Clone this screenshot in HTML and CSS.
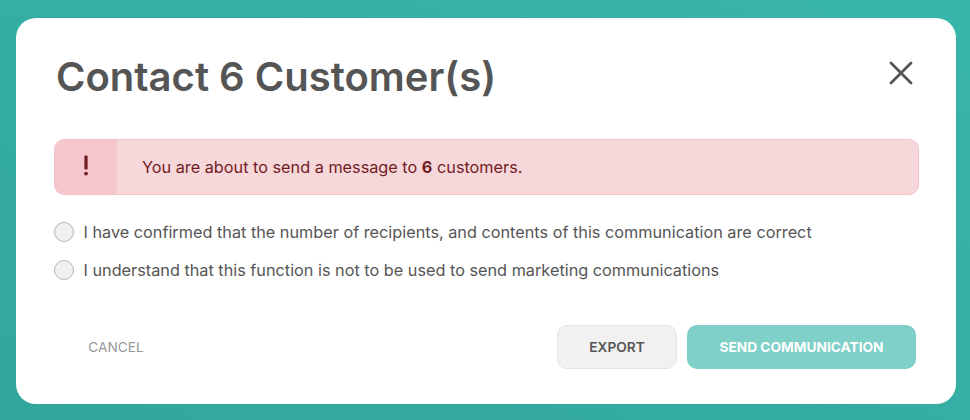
FILE: index.html
```html
<!DOCTYPE html>
<html lang="en">
<head>
  <meta charset="UTF-8">
  <meta name="viewport" content="width=device-width, initial-scale=1.0">
  <title>Contact Customers</title>
  <link rel="stylesheet" href="styles.css">
</head>
<body>
  <div class="modal">
    <!-- Header -->
    <header class="modal-header">
      <h1>Contact 6 Customer(s)</h1>
      <button class="close-btn" aria-label="Close">
        <svg width="24" height="24" viewBox="0 0 24 24" fill="none" stroke="#555" stroke-width="2.8" stroke-linecap="round">
          <path d="M2 2L22 22M22 2L2 22"/>
        </svg>
      </button>
    </header>

    <!-- Warning -->
    <div class="alert">
      <div class="alert-icon">
        <svg width="6" height="22" viewBox="0 0 6 22" fill="#721c24">
          <rect x="1.4" y="0.5" width="3.2" height="14" rx="1.2"/>
          <circle cx="3" cy="18.6" r="1.9"/>
        </svg>
      </div>
      <p class="alert-text">You are about to send a message to <strong>6</strong> customers.</p>
    </div>

    <!-- Confirmations -->
    <div class="confirmations">
      <label class="confirm"><input type="checkbox"><span>I have confirmed that the number of recipients, and contents of this communication are correct</span></label>
      <label class="confirm"><input type="checkbox"><span>I understand that this function is not to be used to send marketing communications</span></label>
    </div>

    <!-- Footer -->
    <footer class="modal-footer">
      <button class="btn btn-cancel">Cancel</button>
      <button class="btn btn-export">Export</button>
      <button class="btn btn-send">Send Communication</button>
    </footer>
  </div>
</body>
</html>
```
FILE: styles.css
```css
* {
  margin: 0;
  padding: 0;
  box-sizing: border-box;
  font-family: Inter, sans-serif;
}

body {
  height: 420px;
  padding: 18px 14px 16px 16px;
  background: linear-gradient(to top right, #32a69b, #38b5aa);
  color: #555;
  overflow: hidden;
}

.modal {
  height: 386px;
  padding: 34px 37px 35px 38px;
  background: white;
  border-radius: 20px;
}

/* Header */
.modal-header {
  display: flex;
  justify-content: space-between;
  height: 87px;
  padding: 0 6px 0 2px;
}

h1 {
  font-size: 40px;
  font-weight: 600;
  line-height: 50px;
}

.close-btn {
  height: 24px;
  margin-top: 9px;
  background: none;
  border: none;
  cursor: pointer;
}

.close-btn svg {
  display: block;
}

/* Warning */
.alert {
  display: flex;
  height: 56px;
  background: #f6d7da;
  border: 1px solid #f5c2ca;
  border-radius: 10px;
  color: #721c24;
  overflow: hidden;
}

.alert-icon {
  display: flex;
  justify-content: center;
  align-items: center;
  width: 62px;
  padding-bottom: 2px;
  background: #f5c6cd;
}

.alert-text {
  padding-left: 25px;
  font-size: 16.25px;
  line-height: 54px;
}

/* Confirmations */
.confirmations {
  display: grid;
  gap: 18px;
  padding-top: 27px;
}

.confirm {
  display: flex;
  align-items: center;
  gap: 9.5px;
  height: 20px;
  font-size: 16.25px;
}

.confirm input {
  appearance: none;
  width: 20px;
  height: 20px;
  background: #f1f1f1;
  border: 1px solid #b0b5ba;
  border-radius: 50%;
}

/* Footer */
.modal-footer {
  display: flex;
  gap: 10px;
  margin-top: 45px;
  padding-right: 3px;
}

.btn {
  height: 44px;
  border: 1px solid transparent;
  border-radius: 10px;
  font-size: 13.7px;
  font-weight: 600;
  text-transform: uppercase;
  cursor: pointer;
}

.btn-cancel {
  width: 124px;
  margin-right: auto;
  background: none;
  color: #999;
  font-weight: 400;
}

.btn-export {
  width: 120px;
  background: #f1f1f1;
  border-color: #e3e3e3;
  color: #555;
}

.btn-send {
  width: 229px;
  background: #7ed0c8;
  color: white;
  font-weight: 700;
}
```
